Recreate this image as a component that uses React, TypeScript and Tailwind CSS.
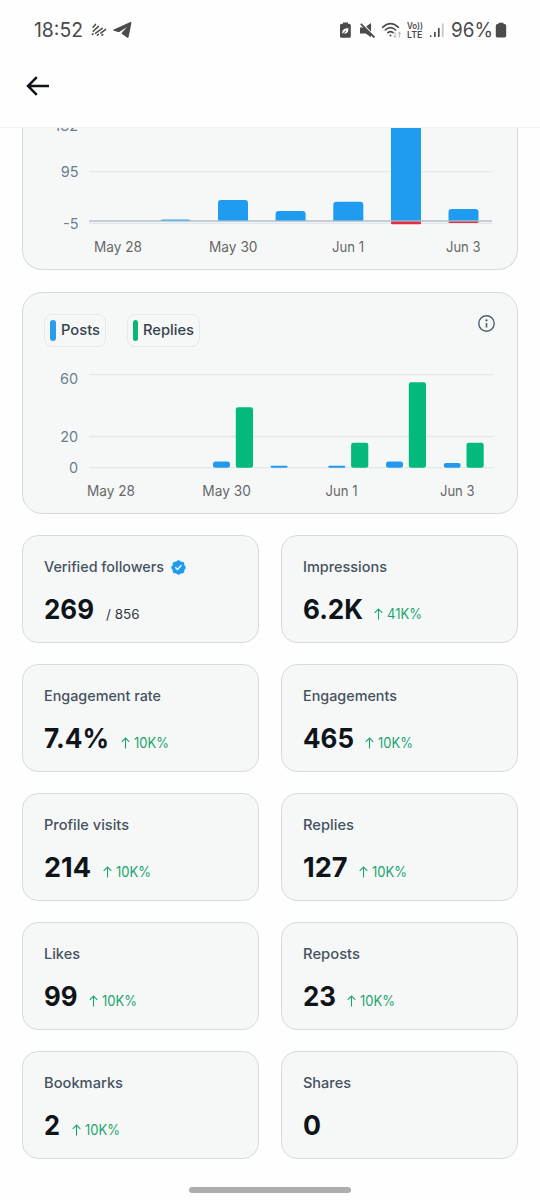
import React from "react";
import clsx from "clsx";

interface Stat {
  label: string;
  value: string;
  valueWidth: number;
  labelWidth: number;
  change?: string;
  total?: string;
  verified?: boolean;
}

interface AxisLabel {
  text: string;
  x: number;
  width: number;
}

const stats: Stat[] = [
  { label: "Verified followers", value: "269", labelWidth: 120, valueWidth: 50, total: "/ 856", verified: true },
  { label: "Impressions", value: "6.2K", labelWidth: 84, valueWidth: 60, change: "41K%" },
  { label: "Engagement rate", value: "7.4%", labelWidth: 117, valueWidth: 65, change: "10K%" },
  { label: "Engagements", value: "465", labelWidth: 94, valueWidth: 51, change: "10K%" },
  { label: "Profile visits", value: "214", labelWidth: 85, valueWidth: 47, change: "10K%" },
  { label: "Replies", value: "127", labelWidth: 51, valueWidth: 44.5, change: "10K%" },
  { label: "Likes", value: "99", labelWidth: 36, valueWidth: 33.5, change: "10K%" },
  { label: "Reposts", value: "23", labelWidth: 57, valueWidth: 33, change: "10K%" },
  { label: "Bookmarks", value: "2", labelWidth: 79, valueWidth: 16, change: "10K%" },
  { label: "Shares", value: "0", labelWidth: 48, valueWidth: 18 },
];

const followBars = [
  { x: 137.5, top: 91.4 },
  { x: 195, top: 72 },
  { x: 252.6, top: 83 },
  { x: 310.3, top: 73.7 },
  { x: 368, top: -20, loss: 2.9 },
  { x: 425.5, top: 81, loss: 1.6 },
];

const followDates: AxisLabel[] = [
  { text: "May 28", x: 71, width: 48 },
  { text: "May 30", x: 186, width: 48.5 },
  { text: "Jun 1", x: 309, width: 32 },
  { text: "Jun 3", x: 423, width: 34.5 },
];

const postBars = [
  { x: 190, posts: 6.3, replies: 60.5 },
  { x: 247.6, posts: 2, replies: 0 },
  { x: 305.3, posts: 2, replies: 25 },
  { x: 363, posts: 6.3, replies: 85.5 },
  { x: 420.7, posts: 4.8, replies: 25 },
];

const postDates: AxisLabel[] = [
  { text: "May 28", x: 64, width: 48 },
  { text: "May 30", x: 179.3, width: 48.5 },
  { text: "Jun 1", x: 302.5, width: 32 },
  { text: "Jun 3", x: 417, width: 34.5 },
];

const StatusBar = () => (
  <div className="flex h-[60px] items-center justify-between pl-[34px] pr-[33px] text-[#4b4b4b]">
    <div className="flex items-center">
      <FitText text="18:52" width={49} height={24} size={20} />
      <svg className="ml-2 h-4 w-4" viewBox="0 0 16 16" fill="none" stroke="currentColor" strokeWidth="1.5" strokeLinecap="round">
        <path d="M2 5.2L4.5 2.4M2.2 9.2L7.4 4.4M1.4 12.4L2 11.8M4.7 11.2L11.2 6.4M6.4 13.2L7.5 12.2M9.8 11.2L14.6 7.4M11 13.2L11.8 12.6" />
      </svg>
      <svg className="ml-1.5 h-[18px] w-[19px]" viewBox="0 0 19 18" fill="currentColor">
        <path d="M.8 9.8C0 9.5.1 8.8.9 8.5L16.8 1.3C17.9.8 18.5 1.2 18.3 2.4L15.6 16C15.4 17 14.8 17.2 14 16.6L9.1 12.9C8.5 12.4 8.5 11.9 9 11.4L14 6L6.7 10.8C6.2 11.1 5.7 11.2 5.1 11z" />
      </svg>
    </div>
    <div className="flex items-center">
      <svg className="h-[18px] w-[13px]" viewBox="0 0 13 18" fill="currentColor">
        <path d="M4 2.8V1.4h5v1.4h1.2A1.6 1.6 0 0 1 11.8 4.4v10.8a1.6 1.6 0 0 1-1.6 1.6H2.6A1.6 1.6 0 0 1 1 15.2V4.4A1.6 1.6 0 0 1 2.6 2.8z" />
        <path d="M3.4 12.8C2.6 9.8 4.5 7 9.4 7.2C9.8 11 8 13.2 4.7 12.2z" fill="#fff" />
        <path d="M3.2 13.4L7 9.8" stroke="currentColor" strokeWidth="1" />
      </svg>
      <svg className="ml-[7px] h-[17px] w-[17px]" viewBox="0 0 17 17" fill="currentColor">
        <path d="M1 5.4h4L12 12.4V15.2L6.6 11.6H1zM7.2 4.6L12 1v8.4z" />
        <path d="M1.8 1.8L15.5 15.5" stroke="currentColor" strokeWidth="1.8" />
      </svg>
      <svg className="ml-[5px] h-[18px] w-[22px]" viewBox="0 0 22 18" fill="none" stroke="currentColor" strokeWidth="1.6" strokeLinecap="round">
        <path d="M1.6 6.3Q9.5-1.2 17.4 6.3M4.3 9Q9.5 4.2 14.7 9M6.9 11.7Q9.5 9.5 12 11.7" />
        <circle cx="9.5" cy="14.5" r="1" fill="currentColor" stroke="none" />
        <path d="M14 11.3v5M12.6 15l1.4 1.4 1.4-1.4M18.3 16.4v-5M16.9 12.7l1.4-1.4 1.4 1.4" stroke="#b5b5b5" strokeWidth="1" />
      </svg>
      <div className="ml-[4px] flex flex-col gap-px">
        <FitText text="Vo))" width={16} height={7} size={8.5} weight={600} />
        <FitText text="LTE" width={15.5} height={9} size={9.5} weight={600} />
      </div>
      <svg className="ml-[6px] h-4 w-[16px]" viewBox="0 0 16 16" strokeWidth="1.7" strokeLinecap="round" stroke="currentColor">
        <path d="M1.7 14v.2M5.9 10.6V14.2M9.8 6.5V14.2" />
        <path d="M13.7 2V14.2" stroke="#c4c4c4" />
      </svg>
      <div className="ml-[6px]">
        <FitText text="96%" width={42} height={24} size={20} />
      </div>
      <svg className="ml-[2px] h-4 w-3" viewBox="0 0 12 16" fill="currentColor">
        <path d="M3.5 2V.7h5V2h1A1.7 1.7 0 0 1 11.2 3.7v10A1.7 1.7 0 0 1 9.5 15.4h-7A1.7 1.7 0 0 1 .8 13.7v-10A1.7 1.7 0 0 1 2.5 2z" />
      </svg>
    </div>
  </div>
);

interface FitTextProps {
  text: string;
  width: number;
  height: number;
  size: number;
  weight?: number;
}

// Keeps a label at a fixed width, whatever the font's own metrics are
const FitText: React.FC<FitTextProps> = ({ text, width, height, size, weight = 400 }) => (
  <svg className="block shrink-0 overflow-visible" width={width} height={height} fill="currentColor">
    <text
      x="0"
      y={height / 2 + size * 0.364}
      fontSize={size}
      fontWeight={weight}
      textLength={width}
      lengthAdjust="spacingAndGlyphs"
    >
      {text}
    </text>
  </svg>
);

const DateAxis = ({ labels, y }: { labels: AxisLabel[]; y: number }) => (
  <g fill="#686868" fontSize="14.3">
    {labels.map((label) => (
      <text key={label.text} x={label.x} y={y} textLength={label.width} lengthAdjust="spacingAndGlyphs">
        {label.text}
      </text>
    ))}
  </g>
);

const FollowsChart = () => (
  <div className="h-[142px] rounded-b-[20px] border border-t-0 border-[#d3dbde] bg-[#f6f8f8]">
    <svg className="block" width="494" height="141" viewBox="0 0 494 141">
      <path d="M66 43.7H469M66 95.3H469" stroke="#e2e8ec" strokeWidth="1.3" />
      <g fill="#6b7f90" fontSize="14.5" textAnchor="end">
        <text x="55" y="3">182</text>
        <text x="55.5" y="49">95</text>
        <text x="55.5" y="100.7">-5</text>
      </g>
      <path d="M66 93H469" stroke="#b4c0c9" strokeWidth="1.6" />
      {followBars.map((bar) => {
        const radius = Math.min(3, 92.4 - bar.top);
        return (
          <g key={bar.x}>
            <path
              d={`M${bar.x} 92.4V${bar.top + radius}q0-${radius} 3-${radius}h24q3 0 3 ${radius}V92.4z`}
              fill="#1f9cf0"
            />
            {bar.loss && <rect x={bar.x} y="93.4" width="30" height={bar.loss} rx="1" fill="#e0303f" />}
          </g>
        );
      })}
      <DateAxis labels={followDates} y={124.3} />
    </svg>
  </div>
);

const LegendChip = ({ label, width, color }: { label: string; width: number; color: string }) => (
  <div className="flex h-[33px] items-center rounded-lg border border-[#e5eaec] px-[5px]">
    <span className={clsx("h-[21px] w-[5.5px] rounded-full", color)} />
    <div className="mb-[2px] ml-[5px] text-[#37424c]">
      <FitText text={label} width={width} height={21} size={14.5} weight={500} />
    </div>
  </div>
);

const PostsChart = () => (
  <div className="mt-[22px] h-[222px] rounded-[20px] border border-[#d3dbde] bg-[#f6f8f8]">
    <div className="flex h-[54px] justify-between pl-[21px] pr-[21px] pt-[21px]">
      <div className="flex gap-[21px]">
        <LegendChip label="Posts" width={39} color="bg-[#2b9bec]" />
        <LegendChip label="Replies" width={51} color="bg-[#0bb57a]" />
      </div>
      <svg className="h-[19px] w-[19px]" viewBox="0 0 19 19" fill="none" stroke="#4e5e6c">
        <circle cx="9.5" cy="9.5" r="7.7" strokeWidth="1.4" />
        <path d="M9.5 9.1V13.5" strokeWidth="1.6" />
        <circle cx="9.5" cy="6.4" r="1.1" fill="#4e5e6c" stroke="none" />
      </svg>
    </div>
    <svg className="block" width="494" height="166" viewBox="0 0 494 166">
      <path d="M66 27.7H470M66 89.5H470M66 120.7H470" stroke="#e2e8ec" strokeWidth="1.3" />
      <g fill="#6b7f90" fontSize="14.5" textAnchor="end">
        <text x="55.2" y="36.9">60</text>
        <text x="55.2" y="95">20</text>
        <text x="55.2" y="126.2">0</text>
      </g>
      {postBars.map((bar) => (
        <g key={bar.x}>
          <rect x={bar.x} y={120.8 - bar.posts} width="17" height={bar.posts} rx={Math.min(2.5, bar.posts / 2)} fill="#2499ec" />
          {bar.replies > 0 && (
            <rect x={bar.x + 22.8} y={120.8 - bar.replies} width="17.2" height={bar.replies} rx="2.2" fill="#03b97c" />
          )}
        </g>
      ))}
      <DateAxis labels={postDates} y={149.4} />
    </svg>
  </div>
);

const VerifiedBadge = () => (
  <svg className="ml-[6px] mt-px h-[17px] w-[17px]" viewBox="0 0 22 22">
    <path
      fill="#1d9bf0"
      d="M20.396 11c-.018-.646-.215-1.275-.57-1.816-.354-.54-.852-.972-1.438-1.246.223-.607.27-1.264.14-1.897-.131-.634-.437-1.218-.882-1.687-.47-.445-1.053-.75-1.687-.882-.633-.13-1.29-.083-1.897.14-.273-.587-.704-1.086-1.245-1.44S11.647 1.62 11 1.604c-.646.017-1.273.213-1.813.568s-.969.854-1.24 1.44c-.608-.223-1.267-.272-1.902-.14-.635.13-1.22.436-1.69.882-.445.47-.749 1.055-.878 1.688-.13.633-.08 1.29.144 1.896-.587.274-1.087.705-1.443 1.245-.356.54-.555 1.17-.574 1.817.02.647.218 1.276.574 1.817.356.54.856.972 1.443 1.245-.224.606-.274 1.263-.144 1.896.13.634.433 1.218.877 1.688.47.443 1.054.747 1.687.878.633.132 1.29.084 1.897-.136.274.586.705 1.084 1.246 1.439.54.354 1.17.551 1.816.569.647-.016 1.276-.213 1.817-.567s.972-.854 1.245-1.44c.604.239 1.266.296 1.903.164.636-.132 1.22-.447 1.68-.907.46-.46.776-1.044.908-1.681s.075-1.299-.165-1.903c.586-.274 1.084-.705 1.439-1.246.354-.54.551-1.17.569-1.816z"
    />
    <path fill="#fff" d="M9.662 14.85l-3.429-3.428 1.293-1.302 2.072 2.072 4.4-4.794 1.347 1.246z" />
  </svg>
);

const StatCard = ({ stat }: { stat: Stat }) => (
  <div className="h-[108px] rounded-[16px] border border-[#d5dce0] bg-[#f6f8f8] px-[21px] pt-[20px]">
    <div className="flex h-[21px] items-center text-[#46525e]">
      <FitText text={stat.label} width={stat.labelWidth} height={21} size={14.5} weight={500} />
      {stat.verified && <VerifiedBadge />}
    </div>
    <div className="mt-[16px] flex h-8 items-center text-[#0f1419]">
      <FitText text={stat.value} width={stat.valueWidth} height={32} size={27.5} weight={700} />
      {stat.total && (
        <div className="ml-3 mt-[9px] text-[#33383c]">
          <FitText text={stat.total} width={33.5} height={20} size={13.5} />
        </div>
      )}
      {stat.change && (
        <div className="ml-[11.5px] mt-[9px] flex items-center text-[#1ba56d]">
          <svg className="h-[12px] w-[9px]" viewBox="0 0 9 12" fill="none" stroke="currentColor" strokeWidth="1.1">
            <path d="M4.5 11.5V1M.7 4.8L4.5 1L8.3 4.8" />
          </svg>
          <div className="ml-[4px]">
            <FitText text={stat.change} width={35} height={20} size={13.8} />
          </div>
        </div>
      )}
    </div>
  </div>
);

export default function App() {
  return (
    <div className="flex h-[1200px] w-[540px] flex-col overflow-hidden bg-[#fefefe] font-['Inter',sans-serif]">
      <StatusBar />
      <header className="flex h-[68px] items-center border-b border-[#eff2f3] pb-[15px] pl-[26px]">
        <svg className="h-5 w-6" viewBox="0 0 24 20" fill="none" stroke="#0f1419" strokeWidth="2.5">
          <path d="M23 10H2M10.8 1.2L2 10L10.8 18.8" />
        </svg>
      </header>
      <main className="flex-1 px-[22px]">
        <FollowsChart />
        <PostsChart />
        <div className="mt-[21.4px] grid grid-cols-2 gap-x-[21.6px] gap-y-[21px]">
          {stats.map((stat) => (
            <StatCard key={stat.label} stat={stat} />
          ))}
        </div>
      </main>
      <div className="mx-auto mb-[7px] h-[6px] w-[162px] rounded-full bg-[#adadad]" />
    </div>
  );
}
